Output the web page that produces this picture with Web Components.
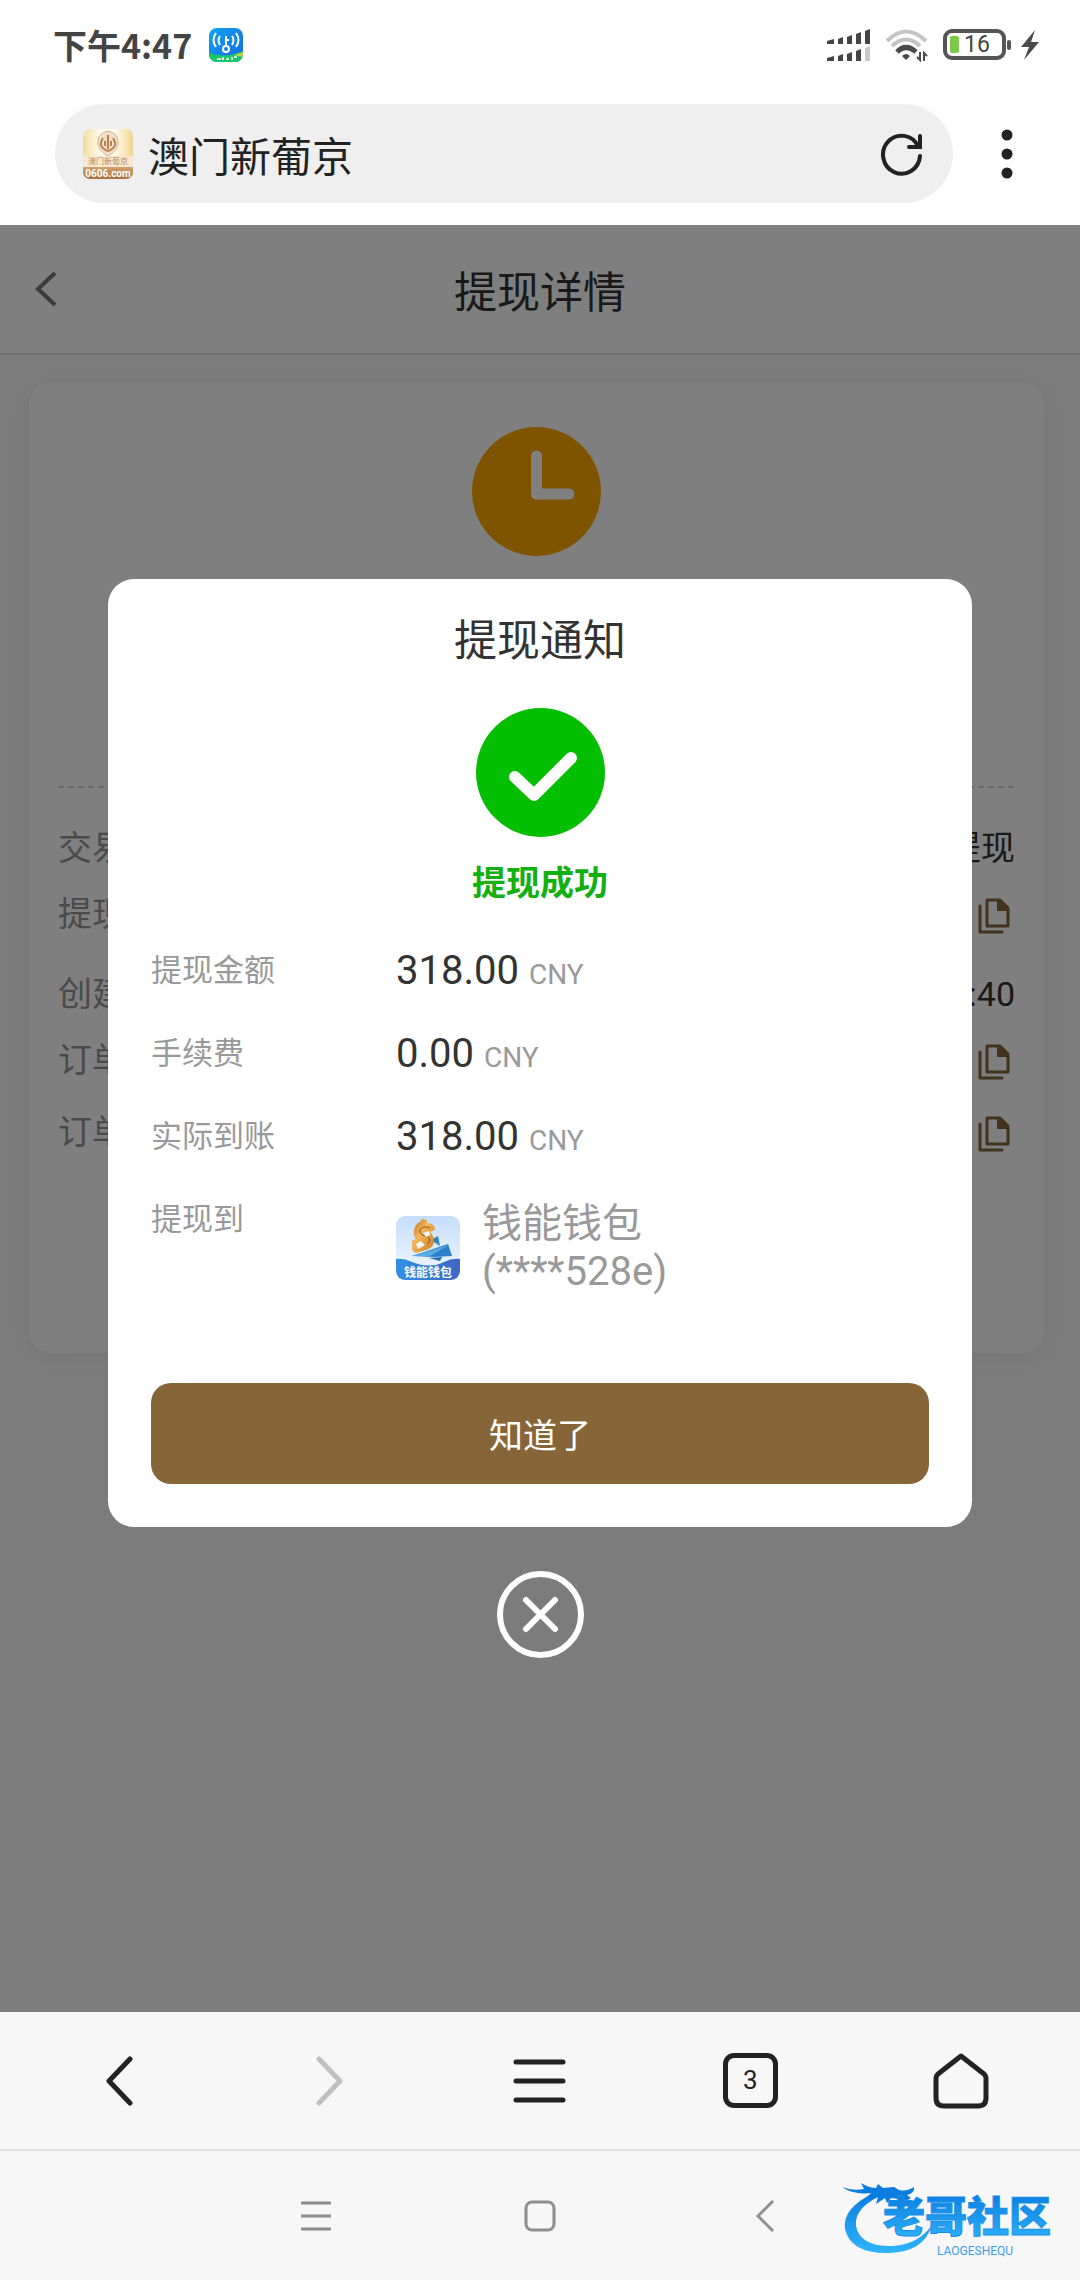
<!DOCTYPE html>
<html lang="zh-CN">
<head>
<meta charset="utf-8">
<meta name="viewport" content="width=device-width, initial-scale=1">
<title>提现详情</title>
<style>
    body {
        margin: 0;
        background: #fff;
        color: #333;
        font-family: Roboto, "Noto Sans CJK SC", sans-serif;
    }
</style>
</head>
<body>
<app-shell>
    <status-bar slot="top" time="下午4:47" battery="16"></status-bar>
    <address-bar slot="top">澳门新葡京</address-bar>
    <withdraw-page heading="提现详情">
        <detail-row label="交易" size="md">提现</detail-row>
        <detail-row label="提现" size="lg" copy></detail-row>
        <detail-row label="创建" size="md">:40</detail-row>
        <detail-row label="订单" copy></detail-row>
        <detail-row label="订单" copy></detail-row>
    </withdraw-page>
    <notice-dialog slot="dialog" heading="提现通知" status="提现成功" action="知道了">
        <notice-row label="提现金额"><money-value amount="318.00" currency="CNY"></money-value></notice-row>
        <notice-row label="手续费"><money-value amount="0.00" currency="CNY"></money-value></notice-row>
        <notice-row label="实际到账"><money-value amount="318.00" currency="CNY"></money-value></notice-row>
        <notice-row label="提现到"><wallet-value name="钱能钱包" account="(****528e)"></wallet-value></notice-row>
    </notice-dialog>
    <browser-toolbar slot="bottom" tabs="3"></browser-toolbar>
    <system-nav slot="bottom"></system-nav>
</app-shell>

<script>
// Shared bits for every element: box sizing and bare buttons
const BASE = `
    * { box-sizing: border-box; }
    svg { display: block; flex: none; }
    button {
        margin: 0; padding: 0; border: 0; background: none;
        color: inherit; font: inherit; cursor: pointer;
        display: flex; align-items: center; justify-content: center;
    }
`;

class BaseElement extends HTMLElement {
    constructor() {
        super();
        this.attachShadow({ mode: 'open' });
    }
    connectedCallback() {
        this.shadowRoot.innerHTML = `<style>${BASE}</style>${this.render()}`;
    }
    attr(name) {
        return this.getAttribute(name) || '';
    }
}

class AppShell extends BaseElement {
    render() {
        return `
            <style>
                :host { display: flex; flex-direction: column; min-height: 100vh; }
                main { flex: 1; display: grid; background: #f8f8f8; }
                main > * { grid-area: 1 / 1; min-width: 0; }
                .overlay {
                    z-index: 1;
                    display: flex; align-items: center; justify-content: center;
                    background: rgba(0, 0, 0, 0.5);
                }
            </style>
            <slot name="top"></slot>
            <main>
                <div><slot></slot></div>
                <div class="overlay"><slot name="dialog"></slot></div>
            </main>
            <slot name="bottom"></slot>
        `;
    }
}

class StatusBar extends BaseElement {
    // one row of the dual SIM signal, "on" bars are dark
    bars(y, on) {
        return [0, 1, 2, 3, 4].map(i => {
            const x = i * 9;
            const w = i ? 5 : 7;
            const h = [4, 6, 8, 11, 14][i];
            return `<path d="M${x - w + 7} ${y - h + 1}L${x + 7} ${y - h - 1}V${y}H${x - w + 7}Z" fill="${i < on ? '#444' : '#c8c8c8'}"/>`;
        }).join('');
    }
    render() {
        return `
            <style>
                :host {
                    display: flex; align-items: center; justify-content: space-between;
                    height: 90px; padding: 0 40px 0 53px; color: #444;
                }
                div { display: flex; align-items: center; }
                .left { gap: 17px; }
                time { font: bold 34px/48px "Noto Sans CJK SC", sans-serif; }
                .signal { margin-right: 15px; }
                .wifi { margin-right: 15px; }
                .battery { position: relative; }
                .battery span {
                    position: absolute; left: 21px; top: 0;
                    font-size: 23px; line-height: 32px;
                }
                .bolt { margin-left: 8px; }
            </style>
            <div class="left">
                <time>${this.attr('time')}</time>
                <svg width="34" height="34" viewBox="0 0 34 34">
                    <defs>
                        <clipPath id="r"><rect width="34" height="34" rx="8"/></clipPath>
                        <linearGradient id="b" x2="1" y2="1"><stop stop-color="#11a4f5"/><stop offset="1" stop-color="#1768dc"/></linearGradient>
                    </defs>
                    <g clip-path="url(#r)">
                        <rect width="34" height="34" fill="url(#b)"/>
                        <path d="M0 25Q17 31 34 23V34H0Z" fill="#19c765"/>
                        <path d="M25 27L34 24V29Z" fill="#b9d24b"/>
                    </g>
                    <g fill="none" stroke="#fff" stroke-width="2">
                        <circle cx="17" cy="21" r="3"/>
                        <path d="M17 18V8M17 12H20M11 8Q8 12 11 17M7 5Q2 12 7 19M23 8Q26 12 23 17M27 5Q32 12 27 19"/>
                        <path d="M8 31H12M14 29V32M17 31H20M23 29V32M25 29H28" stroke-width="1.5"/>
                    </g>
                </svg>
            </div>
            <div>
                <svg class="signal" width="43" height="34" viewBox="0 0 43 34">${this.bars(16, 5)}${this.bars(33, 4)}</svg>
                <svg class="wifi" width="43" height="34" viewBox="0 0 43 34" fill="none" stroke-width="4">
                    <path d="M2 13Q21 -6 41 13" stroke="#c4c4c4"/>
                    <path d="M7 18Q21 5 35 18" stroke="#c4c4c4"/>
                    <path d="M12 24Q21 15 31 24" stroke="#4a4a4a" stroke-width="5"/>
                    <path d="M17 28Q21 24 25 28L21 32Z" fill="#4a4a4a"/>
                    <path d="M35 24V32L32 29M39 33V25L42 28" stroke="#4a4a4a" stroke-width="2"/>
                </svg>
                <div class="battery">
                    <svg width="69" height="32" viewBox="0 0 69 32">
                        <rect x="2" y="2" width="59" height="27" rx="7" fill="none" stroke="#555" stroke-width="4"/>
                        <rect x="7" y="7" width="9" height="17" rx="2" fill="#7cc94a"/>
                        <rect x="64" y="11" width="4" height="10" rx="2" fill="#555"/>
                    </svg>
                    <span>${this.attr('battery')}</span>
                </div>
                <svg class="bolt" width="20" height="30" viewBox="0 0 20 30"><path d="M15 0L1 17H9L4 30L19 12H11Z" fill="#4a4a4a"/></svg>
            </div>
        `;
    }
}

class AddressBar extends BaseElement {
    render() {
        return `
            <style>
                :host { display: flex; align-items: center; padding: 14px 50px 22px 55px; color: #222; }
                .field {
                    flex: 1; display: flex; align-items: center; gap: 15px;
                    height: 99px; padding: 0 30px 0 28px;
                    border-radius: 50px; background: #efefef;
                }
                .site { flex: 1; font: 41px/56px "Noto Sans CJK SC", sans-serif; }
                .more { width: 46px; height: 64px; margin-left: 31px; }
            </style>
            <div class="field">
                <svg width="50" height="50" viewBox="0 0 50 50">
                    <defs>
                        <clipPath id="r"><rect width="50" height="50" rx="7"/></clipPath>
                        <linearGradient id="g"><stop stop-color="#f3dd9d"/><stop offset=".35" stop-color="#fffaf0"/><stop offset=".65" stop-color="#fffaf0"/><stop offset="1" stop-color="#f1d58c"/></linearGradient>
                        <linearGradient id="f" x2="0" y2="1"><stop stop-color="#d2a26e"/><stop offset="1" stop-color="#a5713e"/></linearGradient>
                    </defs>
                    <g clip-path="url(#r)">
                        <rect width="50" height="50" fill="url(#g)"/>
                        <rect y="38" width="50" height="12" fill="url(#f)"/>
                        <rect y="27" width="50" height="11" fill="#f9e7d2"/>
                    </g>
                    <path d="M25 2Q36 4 35 15Q34 22 25 27Q16 22 15 15Q14 4 25 2Z" fill="#f3dec8" stroke="#d9b48b" stroke-width="1"/>
                    <path d="M25 6V20M20 9Q14 18 25 22Q36 18 30 9M22 12V17M28 12V17" fill="none" stroke="#b9824f" stroke-width="2"/>
                    <text x="25" y="35" text-anchor="middle" font-size="8" fill="#b58a62">澳门新葡京</text>
                    <text x="25" y="48" text-anchor="middle" font-size="10" font-weight="bold" fill="#fff">0606.com</text>
                </svg>
                <div class="site"><slot></slot></div>
                <button aria-label="刷新">
                    <svg width="42" height="44" viewBox="0 0 42 44" fill="none" stroke="#222" stroke-width="4" stroke-linecap="round">
                        <path d="M39 24A18.500 19 0 1 1 37 14"/>
                        <path d="M39 4V15H28"/>
                    </svg>
                </button>
            </div>
            <button class="more" aria-label="更多">
                <svg width="12" height="50" viewBox="0 0 12 50" fill="#222">
                    <circle cx="6" cy="6" r="5.500"/><circle cx="6" cy="25" r="5.500"/><circle cx="6" cy="44" r="5.500"/>
                </svg>
            </button>
        `;
    }
}

class WithdrawPage extends BaseElement {
    render() {
        return `
            <style>
                :host { display: block; }
                header {
                    display: grid; grid-template-columns: 1fr auto 1fr; align-items: center;
                    height: 130px; padding: 0 35px;
                    background: #fff; border-bottom: 2px solid #dedede;
                }
                header button { justify-self: start; }
                h1 { margin: 0; font: 43px/56px "Noto Sans CJK SC", sans-serif; }
                .card {
                    margin: 28px 36px 28px 29px; padding: 44px 29px 197px;
                    border-radius: 22px; background: #fff;
                    box-shadow: 0 4px 20px rgba(0, 0, 0, 0.06);
                }
                .clock { margin: 0 auto; }
                hr {
                    height: 2px; margin: 230px 0 36px; border: 0;
                    background: repeating-linear-gradient(90deg, #d0d0d0 0 6px, transparent 6px 10px);
                }
            </style>
            <header>
                <button aria-label="返回">
                    <svg width="22" height="36" viewBox="0 0 22 36"><path d="M20 2L3 18L20 34" fill="none" stroke="#777" stroke-width="4"/></svg>
                </button>
                <h1>${this.attr('heading')}</h1>
            </header>
            <section class="card">
                <svg class="clock" width="129" height="129" viewBox="0 0 129 129">
                    <circle cx="64.500" cy="64.500" r="64.500" fill="#ffa800"/>
                    <path d="M64.500 29V67H97" fill="none" stroke="#fff" stroke-width="11" stroke-linecap="round" stroke-linejoin="round"/>
                </svg>
                <hr>
                <slot></slot>
            </section>
        `;
    }
}

class DetailRow extends BaseElement {
    render() {
        const copy = `
            <button aria-label="复制">
                <svg width="32" height="36" viewBox="0 0 32 36" fill="none" stroke="#866538" stroke-width="3" stroke-linejoin="round" stroke-linecap="round">
                    <path d="M2 8V34H24"/>
                    <path d="M9 2H22L30 10V28H9Z"/>
                    <path d="M19 2H22L30 10V13H19Z" fill="#866538" stroke="none"/>
                </svg>
            </button>`;
        return `
            <style>
                :host { display: flex; justify-content: space-between; line-height: 48px; }
                :host([size="md"]) { padding-bottom: 18px; }
                :host([size="lg"]) { padding-bottom: 32px; }
                :host(:not([size])) { padding-bottom: 24px; }
                :host(:last-child) { padding-bottom: 0; }
                .label { font-size: 34px; color: #949494; }
                .value { font-size: 34px; }
                button { height: 48px; padding: 3px 5px 0 0; }
            </style>
            <span class="label">${this.attr('label')}</span>
            ${this.hasAttribute('copy') ? copy : '<span class="value"><slot></slot></span>'}
        `;
    }
}

class NoticeDialog extends BaseElement {
    render() {
        return `
            <style>
                :host { display: flex; flex-direction: column; align-items: center; width: 80%; }
                section {
                    width: 100%; padding: 32px 43px 43px;
                    border-radius: 26px; background: #fff;
                    display: flex; flex-direction: column;
                }
                h2 { margin: 0 0 45px; font: 43px/52px "Noto Sans CJK SC", sans-serif; text-align: center; }
                .check { align-self: center; }
                .status {
                    margin: 22px 0 40px; color: #12b010;
                    font-size: 34px; line-height: 48px; font-weight: bold; text-align: center;
                }
                .rows { display: flex; flex-direction: column; gap: 35px; }
                .ok {
                    height: 101px; margin-top: 87px; border-radius: 20px;
                    background: #866538; color: #fff; font-size: 34px;
                }
                .close { margin-top: 44px; }
            </style>
            <section role="dialog" aria-modal="true" aria-labelledby="title">
                <h2 id="title">${this.attr('heading')}</h2>
                <svg class="check" width="129" height="129" viewBox="0 0 129 129">
                    <circle cx="64.500" cy="64.500" r="64.500" fill="#04be02"/>
                    <path d="M39 69L58 87L95 50" fill="none" stroke="#fff" stroke-width="12" stroke-linecap="round" stroke-linejoin="round"/>
                </svg>
                <p class="status">${this.attr('status')}</p>
                <div class="rows"><slot></slot></div>
                <button class="ok">${this.attr('action')}</button>
            </section>
            <button class="close" aria-label="关闭">
                <svg width="87" height="87" viewBox="0 0 87 87" fill="none" stroke="#fff" stroke-width="6" stroke-linecap="round">
                    <circle cx="43.500" cy="43.500" r="40.500"/>
                    <path d="M29 29L58 58M58 29L29 58"/>
                </svg>
            </button>
        `;
    }
}

class NoticeRow extends BaseElement {
    render() {
        return `
            <style>
                :host { display: grid; grid-template-columns: 245px 1fr; align-items: start; }
                .label { font-size: 31px; line-height: 48px; color: #999; }
            </style>
            <span class="label">${this.attr('label')}</span>
            <slot></slot>
        `;
    }
}

class MoneyValue extends BaseElement {
    render() {
        return `
            <style>
                :host { display: flex; align-items: baseline; gap: 10px; }
                .amount { font-size: 40px; line-height: 48px; }
                .currency { font-size: 28px; line-height: 32px; color: #999; }
            </style>
            <span class="amount">${this.attr('amount')}</span>
            <span class="currency">${this.attr('currency')}</span>
        `;
    }
}

class WalletValue extends BaseElement {
    render() {
        return `
            <style>
                :host { display: flex; align-items: center; gap: 22px; padding-top: 4px; }
                div { display: flex; flex-direction: column; font-size: 40px; line-height: 48px; color: #999; }
            </style>
            <svg width="64" height="64" viewBox="0 0 64 64">
                <defs>
                    <clipPath id="r"><rect width="64" height="64" rx="9"/></clipPath>
                    <linearGradient id="sky" x2="0" y2="1"><stop stop-color="#c6defa"/><stop offset="1" stop-color="#f2f9ff"/></linearGradient>
                    <linearGradient id="sea"><stop stop-color="#3190e2"/><stop offset="1" stop-color="#3f67c5"/></linearGradient>
                    <linearGradient id="gold" x2="1" y2="1"><stop stop-color="#b96d1d"/><stop offset=".4" stop-color="#f3b45a"/><stop offset="1" stop-color="#c47a22"/></linearGradient>
                </defs>
                <g clip-path="url(#r)">
                    <rect width="64" height="64" fill="url(#sky)"/>
                    <path d="M0 43Q8 42 16 46Q34 53 48 46Q56 42 64 43V64H0Z" fill="url(#sea)"/>
                </g>
                <path d="M35 24L42 20L44 30Z" fill="#2f83bf"/>
                <path d="M24 6L26 3L31 4V7Q39 7 39 14L34 16Q38 19 38 26Q37 32 30 34L20 37L16 34V25L20 23Q17 20 18 14Q19 8 24 6Z" fill="url(#gold)"/>
                <path d="M24 14Q27 9 34 12M24 14Q23 19 30 20Q36 22 32 28" fill="none" stroke="#8f5316" stroke-width="1"/>
                <path d="M27 17L33 15L34 19L30 21ZM20 28L25 25L29 29L22 33Z" fill="#eef5f3"/>
                <path d="M16 40L52 28L56 40L38 41Z" fill="#2d80cb"/>
                <path d="M16 40L53 29L34 40Z" fill="#5aa9df"/>
                <path d="M33 42L46 41L44 45Z" fill="#246db5"/>
                <text x="32" y="61" text-anchor="middle" font-size="12" font-weight="bold" fill="#fff">钱能钱包</text>
            </svg>
            <div>
                <span>${this.attr('name')}</span>
                <span>${this.attr('account')}</span>
            </div>
        `;
    }
}

class BrowserToolbar extends BaseElement {
    render() {
        return `
            <style>
                :host { display: block; background: #f7f7f7; border-bottom: 2px solid #e2e2e2; }
                nav { display: grid; grid-template-columns: repeat(5, 1fr); height: 137px; padding: 0 14px; }
                svg { fill: none; stroke: #222; stroke-width: 5px; stroke-linecap: round; stroke-linejoin: round; }
                .off { stroke: #c0c0c0; }
                .tabs span {
                    width: 55px; height: 55px; border: 5px solid #222; border-radius: 11px;
                    font-size: 26px; line-height: 45px; color: #222;
                }
            </style>
            <nav>
                <button aria-label="后退"><svg width="28" height="50" viewBox="0 0 28 50"><path d="M25 3L4 25L25 47"/></svg></button>
                <button aria-label="前进" disabled><svg class="off" width="28" height="50" viewBox="0 0 28 50"><path d="M3 3L24 25L3 47"/></svg></button>
                <button aria-label="菜单"><svg width="54" height="50" viewBox="0 0 54 50"><path d="M3 6H50M3 25H50M3 44H50"/></svg></button>
                <button class="tabs" aria-label="标签页"><span>${this.attr('tabs')}</span></button>
                <button aria-label="主页"><svg width="56" height="56" viewBox="0 0 56 56"><path d="M28 3L51 21Q53 23 53 25V45Q53 53 45 53H11Q3 53 3 45V25Q3 23 5 21Z"/></svg></button>
            </nav>
        `;
    }
}

class SystemNav extends BaseElement {
    render() {
        return `
            <style>
                :host { display: block; position: relative; background: #f7f7f7; }
                nav { display: flex; justify-content: center; align-items: center; gap: 193px; height: 129px; }
                nav button { width: 32px; height: 32px; }
                svg { fill: none; stroke: #8e8e8e; stroke-width: 3px; }
                .mark { position: absolute; right: 16px; bottom: 22px; stroke: none; }
            </style>
            <nav>
                <button aria-label="最近任务"><svg width="32" height="32" viewBox="0 0 32 32"><path d="M2 3H32M2 16H32M2 29H32"/></svg></button>
                <button aria-label="桌面"><svg width="32" height="32" viewBox="0 0 32 32"><rect x="2" y="2" width="28" height="28" rx="6"/></svg></button>
                <button aria-label="返回"><svg width="32" height="32" viewBox="0 0 32 32"><path d="M24 1L9 16L24 31"/></svg></button>
            </nav>
            <svg class="mark" width="222" height="76" viewBox="0 0 222 76">
                <defs><linearGradient id="g" x2="0" y2="1"><stop stop-color="#0b7de0"/><stop offset="1" stop-color="#2fb4fa"/></linearGradient></defs>
                <path d="M32 11Q0 26 3 47Q9 72 47 71Q82 70 90 43Q77 62 51 64Q18 65 14 44Q12 27 36 15Z" fill="url(#g)"/>
                <path d="M0 5Q10 9 22 7L19 1Q27 6 34 6L36 2L41 6L52 5L57 8Q64 10 72 5Q73 11 65 13L69 16Q65 20 56 17L49 16L45 21L43 16L34 22L36 15L23 17L29 11Q11 13 0 5Z" fill="#0b7de0"/>
                <text x="41" y="50" font-size="42" font-weight="900" fill="url(#g)" stroke="#1690ea" stroke-width="1">老哥社区</text>
                <text x="95" y="73" font-size="12" fill="#3aa0e8">LAOGESHEQU</text>
            </svg>
        `;
    }
}

customElements.define('app-shell', AppShell);
customElements.define('status-bar', StatusBar);
customElements.define('address-bar', AddressBar);
customElements.define('withdraw-page', WithdrawPage);
customElements.define('detail-row', DetailRow);
customElements.define('notice-dialog', NoticeDialog);
customElements.define('notice-row', NoticeRow);
customElements.define('money-value', MoneyValue);
customElements.define('wallet-value', WalletValue);
customElements.define('browser-toolbar', BrowserToolbar);
customElements.define('system-nav', SystemNav);
</script>
</body>
</html>
